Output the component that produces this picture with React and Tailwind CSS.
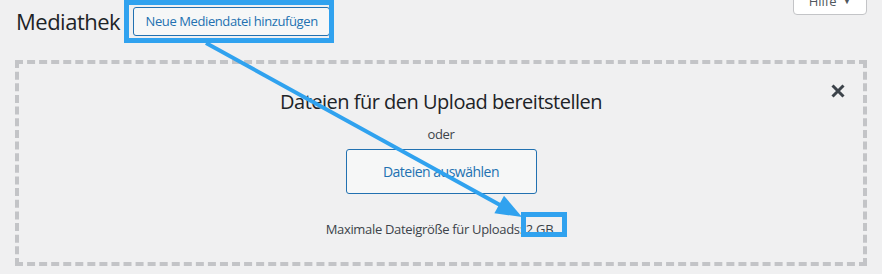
import React from "react";

export default function App() {
  return (
    <div className="relative w-[882px] h-[274px] overflow-hidden bg-[#f0f0f1] font-['Open_Sans',sans-serif] text-[#3c434a]">
      {/* header */}
      <div className="flex justify-between items-start h-[60px] pl-[16px] pr-[15px]">
        <div className="flex items-start">
          <h1 className="text-[22px] tracking-[-0.5px] leading-[30px] mt-[6px] text-[#1d2327] font-normal">Mediathek</h1>
          <button className="ml-[13px] mt-[7px] h-[29px] w-[197px] px-0 rounded-[3px] border border-[#2271b1] bg-[#f6f7f7] text-[13px] tracking-[-0.4px] leading-[27px] text-[#2271b1] whitespace-nowrap">
            Neue Mediendatei hinzufügen
          </button>
        </div>
        <button className="-mt-[13px] h-[28px] w-[74px] rounded-b-[4px] border border-[#c3c4c7] bg-white text-[13px] leading-[26px] text-[#50575e] flex items-center justify-center gap-[6px]">
          <span>Hilfe</span>
          <span className="text-[9px]">▼</span>
        </button>
      </div>

      {/* drop zone */}
      <div className="relative mx-[15px] h-[206px] border-4 border-dashed border-[#c3c4c7] flex flex-col items-center">
        <button className="absolute top-[19px] right-[17px] w-[16px] h-[16px] text-[#3c434a]" aria-label="Schließen">
          <svg viewBox="0 0 16 16" width="16" height="16">
            <path d="M2.5 2.5 L13.5 13.5 M13.5 2.5 L2.5 13.5" stroke="#3c434a" strokeWidth="3" strokeLinecap="butt" />
          </svg>
        </button>
        <h2 className="mt-[24px] text-[20px] tracking-[-0.5px] leading-[28px] text-[#1d2327] font-normal">Dateien für den Upload bereitstellen</h2>
        <p className="mt-[9px] text-[13px] tracking-[-0.3px] leading-[18px] text-[#3c434a]">oder</p>
        <button className="mt-[6px] w-[191px] h-[45px] rounded-[3px] border border-[#2271b1] bg-[#f6f7f7] text-[14px] tracking-[-0.5px] text-[#2271b1]">
          Dateien auswählen
        </button>
        <p className="mt-[26px] text-[13px] tracking-[-0.32px] leading-[18px] text-[#3c434a]">Maximale Dateigröße für Uploads: 2 GB.</p>
      </div>

      {/* annotations */}
      <div className="absolute left-[124px] top-0 w-[210px] h-[43px] border-[5px] border-[#30a2ef]" />
      <div className="absolute left-[521px] top-[212px] w-[46px] h-[25px] border-[5px] border-[#30a2ef]" />
      <svg className="absolute left-0 top-0 pointer-events-none" width="882" height="274">
        <line x1="206" y1="43" x2="500" y2="205" stroke="#30a2ef" strokeWidth="4" />
        <polygon points="522,217 494.4,213.3 504,195.7" fill="#30a2ef" />
      </svg>
    </div>
  );
}
